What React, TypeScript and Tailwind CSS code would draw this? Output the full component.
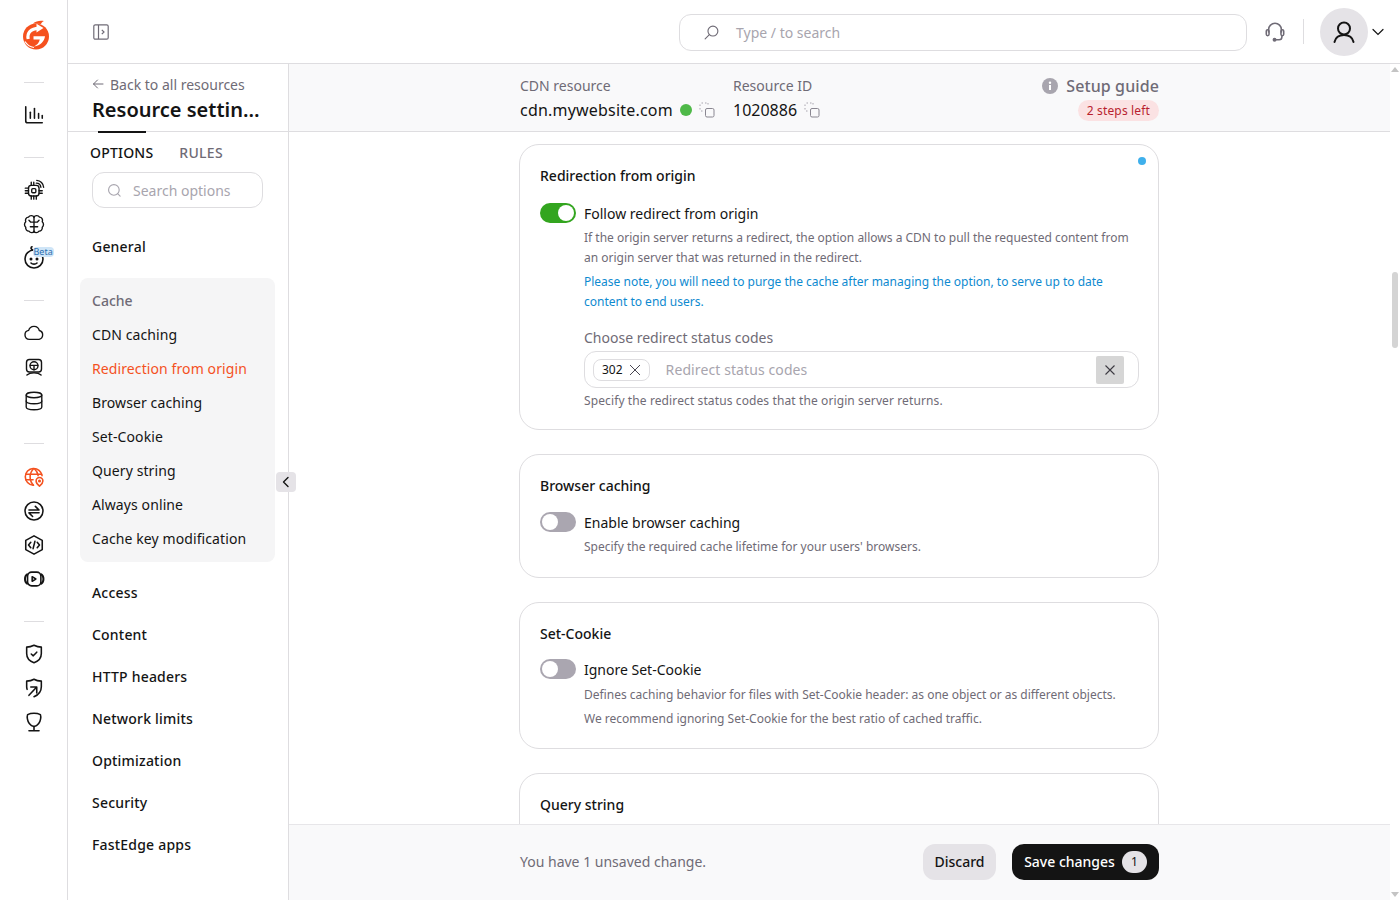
import React from "react";

const S = ({ children, cls = "text-[#141414]", size = 20, sw = 1.7 }: { children: React.ReactNode; cls?: string; size?: number; sw?: number }) => (
  <svg width={size} height={size} viewBox="0 0 24 24" fill="none" stroke="currentColor" strokeWidth={sw} strokeLinecap="round" strokeLinejoin="round" className={cls}>
    {children}
  </svg>
);

const Logo = () => (
  <svg width="26" height="30" viewBox="0 0 26 30">
    <circle cx="13" cy="16.500" r="13" fill="#f5511e" />
    <path d="M10 3.500C13 1 17 .2 21 1c-1.500.6-2.500 1.600-3 3Z" fill="#f5511e" />
    <path d="M5.200 19C3.800 13 8 8.300 15.500 8.300" fill="none" stroke="#fff" strokeWidth="3.200" />
    <path d="M13.500 3.800 20.500 8l-7 4.500Z" fill="#fff" />
    <path d="M10.500 16.200H22C21.200 21.500 17.500 25.500 11 26.600 14.500 24.800 16.200 22.500 16.800 19.600H10.500Z" fill="#fff" />
    <path d="M2 21.500C4 25 7 27 11 27.500" fill="none" stroke="#fff" strokeWidth="1.200" />
  </svg>
);

const railIcons: Record<string, React.ReactNode> = {
  chart: <S size={22}><path d="M3 3v15.500a2 2 0 0 0 2 2h16" /><path d="M8 15.500V9" /><path d="M12.500 15.500V5" /><path d="M17 15.500v-5" /><path d="M21 15.500v-3" /></S>,
  chip: <S size={22} sw={1.5}><rect x="6" y="7" width="11.500" height="11.500" rx="3" /><rect x="9.500" y="10.500" width="4.500" height="4.500" rx="1.200" /><path d="M2.500 10H6M2.500 12.750H6M2.500 15.500H6M17.500 15.500H21M17.500 12.750H21M9 18.500V22M11.750 18.500V22M14.500 18.500V22M9 7V3.500M11.750 7V3.500" /><path d="M14.500 4.500a5 5 0 0 1 5 4.500M15 1.500a8 8 0 0 1 7.500 7.500" /></S>,
  brain: <S size={22} sw={1.5}><path d="M12 4v17" /><path d="M12 4.500C11 2.500 7.500 2 6 4.500 3.500 4.500 2 7 3 9.500 1.200 11 1.200 14 3 15.500 2.500 18 4.500 20 6.500 19.800 8 22 11 22 12 20" /><path d="M12 4.500c1-2 4.500-2.500 6-0 2.500 0 4 2.500 3 5 1.800 1.500 1.800 4.500 0 6 .5 2.500-1.500 4.500-3.500 4.300C16 22 13 22 12 20" /><path d="M12 10H8.500L6.500 8M12 10h3.500l2-2M12 15H8M12 15h4" /></S>,
  baby: <S size={24} sw={1.6}><circle cx="12" cy="13" r="9" /><path d="M11 4C8.800 3.500 8.500 1.500 10 .8" /><path d="M9 17c1.500 1.500 4.500 1.500 6 0" /><circle cx="9" cy="13" r=".7" /><circle cx="15" cy="13" r=".7" /></S>,
  cloud: <S size={22} sw={1.5}><path d="M7 19a5 5 0 0 1-.8-9.900A6 6 0 0 1 17.800 9.300 5 5 0 0 1 17.500 19Z" /></S>,
  monitor: <S><rect x="3" y="3" width="18" height="15" rx="3.500" /><circle cx="12" cy="10.500" r="4.800" /><path d="M7.500 10h9M12 10v5.200" /><path d="M3.500 21.500c2-1.800 4.500-2.500 8.500-2.500s6.500.7 8.500 2.500" /></S>,
  db: <S size={22} sw={1.5}><ellipse cx="12" cy="5.500" rx="8.500" ry="3" /><path d="M3.500 5.500v13c0 1.700 3.800 3 8.500 3s8.500-1.300 8.500-3v-13" /><path d="M3.500 12c0 1.700 3.800 3 8.500 3s8.500-1.300 8.500-3" /></S>,
  globe: <S cls="text-[#f4511e]" size={22}><path d="M20.800 10.500A9.200 9.200 0 1 0 11 21" /><path d="M3 9h17.500M3 15h8" /><path d="M11.500 3c-5 5-5 13 0 18M12.500 3c2.500 2.500 3.700 5 4 7.500" /><path d="M18 22s-3.700-3-3.700-5.700a3.700 3.700 0 0 1 7.400 0C21.700 19 18 22 18 22Z" /><circle cx="18" cy="16.300" r=".8" /></S>,
  exchange: <S size={22}><circle cx="12" cy="12" r="9.800" /><path d="M6.500 11h11l-4-4" /><path d="M17.500 14h-11l4 4" /></S>,
  code: <S size={22}><path d="M12 2l9 5v10l-9 5-9-5V7Z" /><path d="M8.500 9 6 12l2.500 3M15.500 9 18 12l-2.500 3M13 8l-2 8" /></S>,
  video: <S size={22}><rect x="5" y="4.500" width="14.500" height="15" rx="4.500" /><path d="M4.500 7C2.800 8 2.200 9.500 2.200 12s.6 4 2.300 5M20 7c1.700 1 2.300 2.500 2.300 5s-.6 4-2.300 5" strokeWidth="2.200" /><path d="M10 9.500v5l4-2.500Z" /></S>,
  shield: <S size={22}><path d="M12 2.500c3 1.500 5.500 2 8 2v7c0 5-3.500 8.500-8 10-4.500-1.500-8-5-8-10v-7c2.500 0 5-.5 8-2Z" /><path d="m9 12 2.200 2L15 10" /></S>,
  shieldArrow: <S size={22}><path d="M4.500 13.500A10 10 0 0 1 4 10.500v-6c3 0 5.500-.5 8-2 2.500 1.500 5 2 8 2v6c0 5-3.500 9-8 11" /><path d="M15 11l-8.500 9M8.500 11H15v6.500" /></S>,
  bulb: <S size={22}><path d="M12 2.500c3 0 5 .5 7 1.500.5 1.500.5 3 .2 4.500C18.500 13 15.500 16 12 17c-3.500-1-6.500-4-7.200-8.500C4.500 7 4.500 5.500 5 4c2-1 4-1.500 7-1.500Z" /><path d="M12 17v4M6.500 21.500h11" /></S>,
};

const RailIcon = ({ name }: { name: string }) => (
  <div className="h-[34px] w-[34px] flex items-center justify-center">{railIcons[name]}</div>
);

const Divider = () => <div className="h-px w-[20px] bg-[#dedde0] mt-[25px]" />;

const Rail = () => (
  <aside className="w-[68px] h-full shrink-0 border-r border-[#dedde0] flex flex-col items-center">
    <div className="mt-[20px] h-[30px] ml-[4px] flex items-center"><Logo /></div>
    <div className="h-px w-[20px] bg-[#dedde0] mt-[32px]" />
    <div className="mt-[15px]"><RailIcon name="chart" /></div>
    <Divider />
    <div className="mt-[15px]">
      <RailIcon name="chip" />
      <RailIcon name="brain" />
      <div className="relative">
        <RailIcon name="baby" />
        <span className="absolute left-[16px] top-[6px] h-[10px] px-[1px] rounded-[4px] bg-[#cfe5f7] text-[#2d6fb0] text-[9px] leading-[10px]">Beta</span>
      </div>
    </div>
    <Divider />
    <div className="mt-[15px]">
      <RailIcon name="cloud" />
      <RailIcon name="monitor" />
      <RailIcon name="db" />
    </div>
    <Divider />
    <div className="mt-[16px]">
      <RailIcon name="globe" />
      <RailIcon name="exchange" />
      <RailIcon name="code" />
      <RailIcon name="video" />
    </div>
    <Divider />
    <div className="mt-[15px]">
      <RailIcon name="shield" />
      <RailIcon name="shieldArrow" />
      <RailIcon name="bulb" />
    </div>
  </aside>
);

const TopBar = () => (
  <header className="h-[64px] shrink-0 border-b border-[#dedde0] flex items-center bg-white">
    <div className="ml-[25px] w-[16px] h-[16px]">
      <svg width="16" height="16" viewBox="0 0 16 16" fill="none" stroke="#6f6b76" strokeWidth="1.200"><rect x=".8" y=".8" width="14.400" height="14.400" rx="1.500" /><path d="M5.500 1v14" /><path d="m8.800 5.800 2.200 2.200-2.200 2.200" /></svg>
    </div>
    <div className="ml-[570px] mt-[1px] w-[568px] h-[37px] rounded-[12px] border border-[#dedde0] flex items-center pl-[23px]">
      <svg width="17" height="17" viewBox="0 0 24 24" fill="none" stroke="#6f6b76" strokeWidth="1.600" strokeLinecap="round"><circle cx="14" cy="10" r="7" /><path d="M9 15 3 21" /></svg>
      <span className="ml-[16px] text-[14px] text-[#a8a5ae]">Type / to search</span>
    </div>
    <div className="ml-[17px] w-[22px] flex justify-center">
      <svg width="22" height="22" viewBox="0 0 24 24" fill="none" stroke="#6f6b76" strokeWidth="1.700" strokeLinecap="round"><path d="M5 12V9.500a7 7 0 0 1 14 0V12" /><rect x="2.500" y="9.500" width="3" height="6.500" rx="1.500" /><rect x="18.500" y="9.500" width="3" height="6.500" rx="1.500" /><path d="M19.500 16v1.500a3 3 0 0 1-3 3H13" /><circle cx="11.500" cy="20.500" r="1.300" fill="#6f6b76" /></svg>
    </div>
    <div className="ml-[17px] w-px h-[25px] bg-[#dedde0]" />
    <div className="ml-[16px] w-[48px] h-[48px] rounded-full bg-[#e5e3e7] flex items-center justify-center">
      <svg width="24" height="24" viewBox="0 0 24 24" fill="none" stroke="#141414" strokeWidth="2" strokeLinecap="round"><circle cx="12" cy="8.500" r="6" /><path d="M2.500 22c1-4.500 4-7 9.500-7s8.500 2.500 9.500 7" /></svg>
    </div>
    <svg className="ml-[4px]" width="12" height="12" viewBox="0 0 12 12" fill="none" stroke="#141414" strokeWidth="1.200" strokeLinecap="round"><path d="m1 3.500 5 5 5-5" /></svg>
  </header>
);

const NavItem = ({ children, active = false, group = false }: { children: React.ReactNode; active?: boolean; group?: boolean }) => (
  <div className={`flex items-center text-[14px] ${group ? "h-[42px] font-medium tracking-[0.2px]" : "h-[34px] tracking-[0.1px]"} ${active ? "text-[#f4511e]" : "text-[#141414]"}`}>{children}</div>
);

const SidePanel = () => (
  <div className="relative w-[221px] shrink-0 border-r border-[#dedde0] h-full bg-white">
    <div className="h-[68px] border-b border-[#dedde0] pl-[24px] pt-[9px] relative">
      <div className="flex items-center h-[22px] text-[14px] text-[#6f6b76]">
        <svg width="12" height="12" viewBox="0 0 12 12" fill="none" stroke="#6f6b76" strokeWidth="1" strokeLinecap="round"><path d="M11 6H1.500M5.500 2 1.500 6l4 4" /></svg>
        <span className="ml-[6px]">Back to all resources</span>
      </div>
      <div className="mt-[1px] text-[20px] leading-[28px] font-semibold text-[#141414] whitespace-nowrap">Resource settin…</div>
      <div className="absolute left-[30px] bottom-[-2px] w-[48px] h-[2px] bg-[#141414]" />
    </div>
    <div className="flex pl-[22px] h-[40px] items-center text-[14px]">
      <span className="text-[#141414] font-medium tracking-[0.2px]">OPTIONS</span>
      <span className="ml-[26px] text-[#6f6b76] font-medium tracking-[0.3px]">RULES</span>
    </div>
    <div className="ml-[24px] w-[171px] h-[36px] rounded-[12px] border border-[#dedde0] flex items-center pl-[14px]">
      <svg width="15" height="15" viewBox="0 0 24 24" fill="none" stroke="#a8a5ae" strokeWidth="1.800" strokeLinecap="round"><circle cx="11" cy="11" r="8.500" /><path d="m21 21-4-4" /></svg>
      <span className="ml-[11px] text-[14px] text-[#a8a5ae]">Search options</span>
    </div>
    <div className="ml-[24px] mt-[17px]"><NavItem group>General</NavItem></div>
    <div className="mx-[12px] mt-[11px] w-[195px] rounded-[8px] bg-[#f5f5f6] px-[12px] pt-[5px] h-[284px]">
      <div className="h-[34px] flex items-center text-[14px] text-[#6f6b76] font-medium">Cache</div>
      <NavItem>CDN caching</NavItem>
      <NavItem active>Redirection from origin</NavItem>
      <NavItem>Browser caching</NavItem>
      <NavItem>Set-Cookie</NavItem>
      <NavItem>Query string</NavItem>
      <NavItem>Always online</NavItem>
      <NavItem>Cache key modification</NavItem>
    </div>
    <div className="ml-[24px] mt-[9px]">
      {["Access", "Content", "HTTP headers", "Network limits", "Optimization", "Security", "FastEdge apps"].map((t) => (
        <NavItem key={t} group>{t}</NavItem>
      ))}
    </div>
    <div className="absolute left-[208px] top-[408px] w-[20px] h-[20px] rounded-[4px] bg-[#e5e3e7] flex items-center justify-center">
      <svg width="12" height="12" viewBox="0 0 12 12" fill="none" stroke="#141414" strokeWidth="1.400" strokeLinecap="round" strokeLinejoin="round"><path d="M8 1.500 3.500 6 8 10.500" /></svg>
    </div>
  </div>
);

const Copy = () => (
  <svg width="16" height="16" viewBox="0 0 16 16" fill="none" stroke="#a8a5ae" strokeWidth="1"><rect x="6.500" y="6.500" width="8.500" height="8.500" rx="1.500" stroke="#8a8791" /><path d="M1 4V2.500M2.500 1H4M6 1h1.500M9 1v2M1 6v1.500M2 9h2" strokeDasharray="1.500 1" /></svg>
);

const Toggle = ({ on = false }: { on?: boolean }) => (
  <div className={`w-[36px] h-[20px] rounded-full shrink-0 flex items-center px-[2px] ${on ? "bg-[#33a51f] justify-end" : "bg-[#aaa6b0] justify-start"}`}>
    <div className="w-[16px] h-[16px] rounded-full bg-white" />
  </div>
);

const Card = ({ title, children }: { title: string; children?: React.ReactNode }) => (
  <section className="relative w-[640px] rounded-[20px] border border-[#dedde0] bg-white pl-[20px] pr-[19px] pt-[21px] shrink-0">
    <h3 className="text-[14px] leading-[20px] font-medium text-[#141414]">{title}</h3>
    {children}
  </section>
);

const Desc = ({ children, blue = false, wide = false }: { children: React.ReactNode; blue?: boolean; wide?: boolean }) => (
  <p className={`text-[12px] leading-[20px] ${wide ? "tracking-[0.11px]" : ""} ${blue ? "text-[#0e8ad0]" : "text-[#6f6b76]"}`}>{children}</p>
);

const ToggleRow = ({ on, label }: { on?: boolean; label: string }) => (
  <div className="flex items-center gap-[8px] h-[20px]">
    <Toggle on={on} />
    <span className="text-[14px] text-[#141414]">{label}</span>
  </div>
);

const Content = () => (
  <div className="flex-1 min-w-0 flex h-full">
    <div className="flex-1 min-w-0 flex flex-col h-full">
      <div className="h-[68px] shrink-0 bg-[#f9f9fa] border-b border-[#dedde0] pl-[231px]">
        <div className="w-[639px] flex pt-[11px]">
          <div className="w-[213px]">
            <div className="text-[14px] leading-[22px] text-[#6f6b76]">CDN resource</div>
            <div className="flex items-center h-[26px]">
              <span className="text-[16px] tracking-[0.2px] text-[#141414]">cdn.mywebsite.com</span>
              <span className="ml-[7px] w-[12px] h-[12px] rounded-full bg-[#4fb948]" />
              <span className="ml-[7px]"><Copy /></span>
            </div>
          </div>
          <div className="flex-1">
            <div className="text-[14px] leading-[22px] text-[#6f6b76]">Resource ID</div>
            <div className="flex items-center h-[26px]">
              <span className="text-[16px] text-[#141414]">1020886</span>
              <span className="ml-[7px]"><Copy /></span>
            </div>
          </div>
          <div className="flex flex-col items-end">
            <div className="flex items-center h-[22px] gap-[8px]">
              <svg width="16" height="16" viewBox="0 0 16 16"><circle cx="8" cy="8" r="8" fill="#a8a5ae" /><rect x="7" y="7" width="2" height="5" fill="#fff" /><circle cx="8" cy="4.800" r="1.200" fill="#fff" /></svg>
              <span className="text-[16px] font-medium tracking-[0.1px] text-[#6f6b76]">Setup guide</span>
            </div>
            <span className="mt-[3px] h-[21px] px-[9px] rounded-full bg-[#fbe2e3] text-[#b81f2f] text-[12px] tracking-[0.15px] leading-[21px]">2 steps left</span>
          </div>
        </div>
      </div>
      <div className="flex-1 min-h-0 overflow-hidden pl-[230px] pt-[12px] flex flex-col gap-[24px]">
        <Card title="Redirection from origin">
          <span className="absolute right-[12px] top-[12px] w-[8px] h-[8px] rounded-full bg-[#3fb0ec]" />
          <div className="h-[17px]" />
          <ToggleRow on label="Follow redirect from origin" />
          <div className="pl-[44px] mt-[5px]">
            <Desc>If the origin server returns a redirect, the option allows a CDN to pull the requested content from an origin server that was returned in the redirect.</Desc>
            <div className="mt-[4px]"><Desc blue>Please note, you will need to purge the cache after managing the option, to serve up to date content to end users.</Desc></div>
            <div className="mt-[16px] text-[14px] leading-[20px] text-[#6f6b76]">Choose redirect status codes</div>
            <div className="mt-[3px] h-[37px] rounded-[12px] border border-[#dedde0] flex items-center pl-[8px] pr-[14px]">
              <div className="h-[22px] px-[8px] rounded-[8px] border border-[#dedde0] flex items-center gap-[6px] text-[12px] text-[#141414]">
                302
                <svg width="12" height="12" viewBox="0 0 12 12" fill="none" stroke="#4a4752" strokeWidth="1"><path d="M1 1l10 10M11 1 1 11" /></svg>
              </div>
              <span className="ml-[16px] text-[14px] text-[#a8a5ae] tracking-[0.1px] flex-1">Redirect status codes</span>
              <div className="w-[28px] h-[28px] rounded-[2px] bg-[#d6d6d6] flex items-center justify-center">
                <svg width="12" height="12" viewBox="0 0 12 12" fill="none" stroke="#3d3b42" strokeWidth="1.100"><path d="M1.500 1.500l9 9M10.500 1.500l-9 9" /></svg>
              </div>
            </div>
            <div className="mt-[3px]"><Desc wide>Specify the redirect status codes that the origin server returns.</Desc></div>
          </div>
          <div className="h-[18px]" />
        </Card>
        <Card title="Browser caching">
          <div className="h-[16px]" />
          <ToggleRow label="Enable browser caching" />
          <div className="pl-[44px] mt-[5px]"><Desc>Specify the required cache lifetime for your users' browsers.</Desc></div>
          <div className="h-[20px]" />
        </Card>
        <Card title="Set-Cookie">
          <div className="h-[15px]" />
          <ToggleRow label="Ignore Set-Cookie" />
          <div className="pl-[44px] mt-[6px] flex flex-col gap-[4px]">
            <Desc>Defines caching behavior for files with Set-Cookie header: as one object or as different objects.</Desc>
            <Desc>We recommend ignoring Set-Cookie for the best ratio of cached traffic.</Desc>
          </div>
          <div className="h-[19px]" />
        </Card>
        <Card title="Query string"><div className="h-[80px]" /></Card>
      </div>
      <footer className="h-[76px] shrink-0 bg-[#f9f9fa] border-t border-[#e7e6e9] pl-[231px]">
        <div className="w-[639px] h-full flex items-center pb-[1px]">
          <span className="text-[14px] text-[#6f6b76] flex-1 mb-[2px]">You have 1 unsaved change.</span>
          <button className="h-[36px] w-[73px] rounded-[12px] bg-[#e5e3e7] text-[14px] font-medium text-[#141414] pb-[2px]">Discard</button>
          <button className="ml-[16px] h-[36px] w-[147px] rounded-[12px] bg-[#141414] text-[14px] font-medium text-white flex items-center justify-center gap-[7px] pb-[1px]">
            Save changes
            <span className="w-[25px] h-[22px] rounded-full bg-[#e5e3e7] text-[#141414] text-[12px] font-normal leading-[22px]">1</span>
          </button>
        </div>
      </footer>
    </div>
    <div className="w-[10px] shrink-0 h-full bg-white relative">
      <div className="absolute left-[1px] top-[3px] w-0 h-0 border-l-[4px] border-r-[4px] border-b-[5px] border-l-transparent border-r-transparent border-b-[#c4c4c4]" />
      <div className="absolute left-[2px] top-[208px] w-[6px] h-[76px] rounded-[3px] bg-[#d4d4d4]" />
      <div className="absolute left-[1px] bottom-[3px] w-0 h-0 border-l-[4px] border-r-[4px] border-t-[5px] border-l-transparent border-r-transparent border-t-[#c4c4c4]" />
    </div>
  </div>
);

export default function App() {
  return (
    <div className="w-[1400px] h-[900px] flex overflow-hidden bg-white text-[#141414] font-['Noto_Sans',sans-serif]">
      <Rail />
      <div className="flex-1 min-w-0 flex flex-col h-full">
        <TopBar />
        <div className="flex-1 min-h-0 flex">
          <SidePanel />
          <Content />
        </div>
      </div>
    </div>
  );
}
